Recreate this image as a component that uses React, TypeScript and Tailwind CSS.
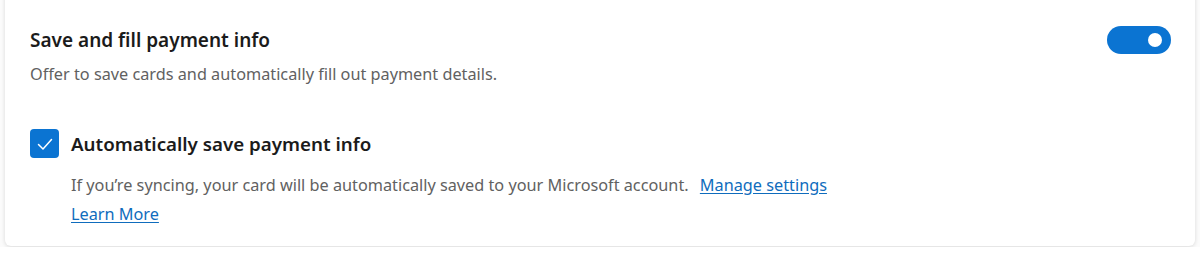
export default function App() {
  return (
    <div className="h-[255px] w-[1200px] bg-[#fbfbfb] pt-0 px-[5px]" style={{ fontFamily: '"Noto Sans", "Open Sans", sans-serif' }}>
      {/* card */}
      <div className="-mt-2 h-[254px] rounded-b-[6px] bg-white shadow-[0_1px_4px_rgba(0,0,0,0.14)] pl-[25px] pr-6 pt-[36px]">
        <div className="flex items-start justify-between">
          <div>
            <div className="text-[19px] leading-[24px] font-semibold text-[#1b1b1b]">Save and fill payment info</div>
            <div className="mt-[12px] text-[16.25px] leading-[20px] text-[#616161]">
              Offer to save cards and automatically fill out payment details.
            </div>
          </div>
          <button className="mt-[-2px] flex h-[28px] w-[64px] items-center justify-end rounded-full bg-[#0b74d2] pr-[9px]">
            <span className="h-[14px] w-[14px] rounded-full bg-white" />
          </button>
        </div>

        <div className="mt-[45px] flex items-center gap-[12px]">
          <div className="flex h-[29px] w-[29px] items-center justify-center rounded-[4px] bg-[#0b74d2]">
            <svg width="20" height="20" viewBox="0 0 20 20" fill="none">
              <path d="M3.5 10.5 L8 15 L16.5 5.5" stroke="white" strokeWidth="1.5" strokeLinecap="round" strokeLinejoin="round" />
            </svg>
          </div>
          <div className="text-[18.75px] leading-[24px] font-semibold text-[#1b1b1b]">Automatically save payment info</div>
        </div>

        <div className="pl-[41px] mt-[13px] text-[16.25px] leading-[29px] text-[#616161]">
          <div>
            If you’re syncing, your card will be automatically saved to your Microsoft account.{' '}
            <a href="#" className="ml-[7px] text-[#0f6cbd] underline underline-offset-2">Manage settings</a>
          </div>
          <div>
            <a href="#" className="text-[#0f6cbd] underline underline-offset-2">Learn More</a>
          </div>
        </div>
      </div>
    </div>
  );
}
